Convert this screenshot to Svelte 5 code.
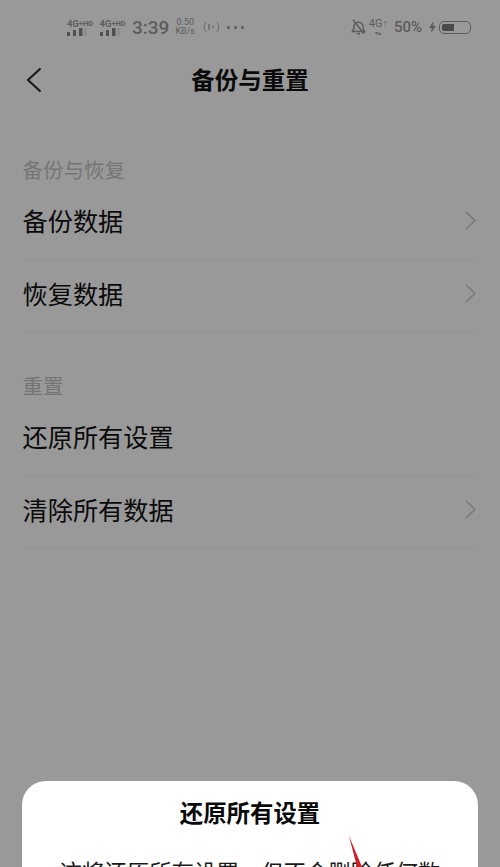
<script lang="ts">
	const sections = [
		{
			title: '备份与恢复',
			items: [
				{ label: '备份数据', arrow: true },
				{ label: '恢复数据', arrow: true }
			]
		},
		{
			title: '重置',
			items: [
				{ label: '还原所有设置', arrow: false },
				{ label: '清除所有数据', arrow: true }
			]
		}
	];
</script>

{#snippet signal()}
	<div class="sim">
		<span class="sim-label">4G<small>+HD</small></span>
		<svg width="22" height="8" viewBox="0 0 22 8">
			<rect x="0" y="4" width="3" height="4" fill="#4f4f4f" />
			<rect x="6" y="2" width="3" height="6" fill="#4f4f4f" />
			<rect x="12" y="0" width="3.500" height="8" fill="#4f4f4f" />
			<rect x="17" y="0" width="3" height="8" fill="#8c8c8c" />
		</svg>
	</div>
{/snippet}

<div class="screen">
	<header class="status">
		<div class="status-left">
			{@render signal()}
			{@render signal()}
			<span class="time">3:39</span>
			<span class="speed">0.50<br />KB/s</span>
			<svg class="hotspot" width="17" height="12" viewBox="0 0 17 12" fill="none" stroke="#6a6a6a" stroke-width="1">
				<path d="M3 1C.8 4 .8 8 3 11" />
				<path d="M14 1c2.200 3 2.200 7 0 10" />
				<path d="M6 3v6" stroke-width="1.400" />
				<circle cx="10" cy="6" r="1" fill="#6a6a6a" stroke="none" />
			</svg>
			<div class="dots"><i></i><i></i><i></i></div>
		</div>
		<div class="status-right">
			<svg class="bell" width="15" height="16" viewBox="0 0 15 16" fill="none" stroke="#5c5c5c" stroke-width="1.500">
				<path d="M1.500 12.500c1.200-1.200 1.400-2.500 1.400-4.500 0-2.800 1.900-4.800 4.600-4.800s4.600 2 4.600 4.800c0 2 .2 3.300 1.400 4.500z" />
				<path d="M6 14.800h3" />
				<path d="M2 .8l11 14" />
			</svg>
			<div class="net">
				<span>4G↑</span>
				<span class="net-sub">▾▴</span>
			</div>
			<span class="percent">50%</span>
			<svg class="bolt" width="7" height="12" viewBox="0 0 7 12">
				<path d="M4.500 0L0 7h2.600L2 12l5-7H4.200z" fill="#5c5c5c" />
			</svg>
			<div class="battery"><div class="level"></div></div>
		</div>
	</header>

	<nav class="topbar">
		<svg class="back" width="16" height="26" viewBox="0 0 16 26" fill="none" stroke="#141414" stroke-width="2">
			<path d="M14.500 1.500L2 13l12.500 11.500" />
		</svg>
		<h1>备份与重置</h1>
	</nav>

	{#each sections as section}
		<section class="group">
			<h2>{section.title}</h2>
			{#each section.items as item}
				<div class="row">
					<span>{item.label}</span>
					{#if item.arrow}
						<svg width="11" height="19" viewBox="0 0 11 19" fill="none" stroke="#787878" stroke-width="1.500">
							<path d="M1 1l9 8.500L1 18" />
						</svg>
					{/if}
				</div>
			{/each}
		</section>
	{/each}

	<div class="dialog">
		<h3>还原所有设置</h3>
		<p>这将还原所有设置，但不会删除任何数据</p>
	</div>

	<svg class="pointer" width="24" height="50" viewBox="0 0 24 50">
		<path d="M0 0L13 50H21z" fill="#cf1c28" />
	</svg>
</div>

<style>
	:global(body) {
		background: #999;
	}

	.screen {
		position: relative;
		width: 500px;
		height: 867px;
		overflow: hidden;
		background: #999;
		font-family: 'Noto Sans CJK SC', 'Liberation Sans', sans-serif;
		color: #0a0a0a;
	}

	.status {
		display: flex;
		justify-content: space-between;
		align-items: center;
		height: 54px;
		padding: 0 29px 0 67px;
		color: #5c5c5c;
		font-family: 'Roboto', sans-serif;
	}

	.status-left,
	.status-right {
		display: flex;
		align-items: center;
	}

	.sim {
		display: flex;
		flex-direction: column;
		width: 32.500px;
		font-size: 9.500px;
		font-weight: 700;
		line-height: 9px;
		white-space: nowrap;
	}

	.sim small {
		font-size: 7.500px;
		vertical-align: 1px;
	}

	.time {
		font-size: 19px;
		font-weight: 500;
		margin-right: 6px;
	}

	.speed {
		font-size: 9px;
		line-height: 9px;
		text-align: center;
		margin-right: 8px;
	}

	.hotspot {
		margin-right: 7px;
	}

	.dots {
		display: flex;
		gap: 4px;
	}

	.dots i {
		width: 3px;
		height: 3px;
		border-radius: 50%;
		background: #5c5c5c;
	}

	.bell {
		margin-right: 3px;
	}

	.net {
		display: flex;
		flex-direction: column;
		align-items: center;
		font-size: 11px;
		line-height: 10px;
		margin-right: 6px;
	}

	.net-sub {
		font-size: 6px;
		line-height: 7px;
	}

	.percent {
		font-size: 15px;
		font-weight: 500;
		margin-right: 7px;
	}

	.battery {
		width: 32px;
		height: 13px;
		margin-left: 3px;
		padding: 2px;
		box-sizing: border-box;
		border: 1.500px solid #5c5c5c;
		border-radius: 5px;
	}

	.level {
		width: 12px;
		height: 100%;
		background: #4a4a4a;
		border-radius: 2px 0 0 2px;
	}

	.topbar {
		display: flex;
		align-items: center;
		justify-content: center;
		position: relative;
		height: 50px;
	}

	.back {
		position: absolute;
		left: 26px;
		top: 13px;
	}

	h1 {
		margin: 0;
		font-size: 23.500px;
		font-weight: 700;
		line-height: 50px;
	}

	.group {
		padding: 0 23px 0 22.500px;
	}

	h2 {
		margin: 0 0 3px;
		padding-top: 37px;
		font-size: 20.500px;
		font-weight: 400;
		line-height: 30px;
		color: #757575;
	}

	.group:first-of-type h2 {
		padding-top: 50px;
	}

	.row {
		display: flex;
		justify-content: space-between;
		align-items: center;
		height: 73px;
		padding: 0 1px 6px 0;
		border-bottom: 1px solid #939393;
		box-sizing: border-box;
		font-size: 25.200px;
	}

	.dialog {
		position: absolute;
		left: 22px;
		top: 781px;
		width: 456px;
		height: 120px;
		padding: 14px 36px 0;
		box-sizing: border-box;
		background: #fff;
		border-radius: 24px;
		text-align: center;
	}

	h3 {
		margin: 0;
		font-size: 23.400px;
		font-weight: 700;
		line-height: 34px;
	}

	p {
		margin: 25px 0 0;
		font-size: 22.400px;
		line-height: 34px;
		color: #1a1a1a;
	}

	.pointer {
		position: absolute;
		left: 349px;
		top: 836px;
	}
</style>
